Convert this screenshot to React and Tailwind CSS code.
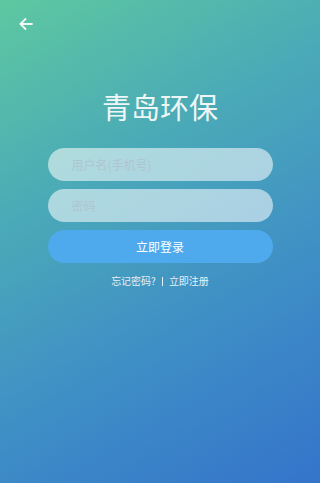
import React from "react";

export default function App() {
  return (
    <div
      className="relative w-[320px] h-[483px] overflow-hidden bg-[linear-gradient(150deg,#5ec8a0_0%,#4aa9b8_35%,#3f8fc6_65%,#3474ca_100%)]"
      style={{ fontFamily: '"Noto Sans CJK SC", "Noto Sans", sans-serif' }}
    >
      <div className="pl-[18px] pt-[16px] h-[40px]">
        <svg width="16" height="16" viewBox="0 0 16 16" fill="none" stroke="#eef8f4" strokeWidth="1.8" strokeLinecap="round" strokeLinejoin="round">
          <path d="M14 8H2.5" />
          <path d="M7.5 3L2.5 8l5 5" />
        </svg>
      </div>
      <div className="flex flex-col items-center">
        <div className="mt-[48px] text-[29px] leading-[36px] text-[#eef7f6]">青岛环保</div>
        <div className="mt-[24px] w-[225px] flex flex-col gap-[8px]">
          <div className="h-[33px] rounded-full bg-white/55 flex items-center pl-[24px] text-[12px] text-[#b0c4d0]">
            用户名(手机号)
          </div>
          <div className="h-[33px] rounded-full bg-white/55 flex items-center pl-[24px] text-[12px] text-[#b0c4d0]">
            密码
          </div>
          <div className="h-[33px] rounded-full bg-[#4eaaec] flex items-center justify-center text-[12px] text-white">
            立即登录
          </div>
        </div>
        <div className="mt-[11px] text-[10px] leading-[14px] text-[#e6f0f8] flex items-center gap-[6px]">
          <span>忘记密码?</span>
          <span className="w-px h-[9px] bg-[#e6f0f8]"></span>
          <span>立即注册</span>
        </div>
      </div>
    </div>
  );
}
